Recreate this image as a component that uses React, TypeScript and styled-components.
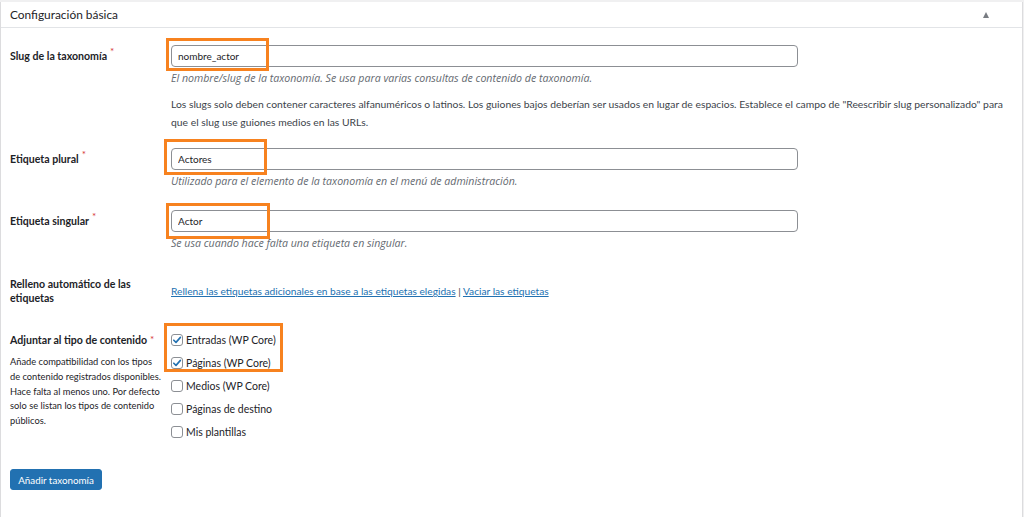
import styled, { createGlobalStyle } from 'styled-components';

/* —— tokens —— */
const ink = '#1d2327';
const body = '#3c434a';
const muted = '#646970';
const blue = '#2271b1';
const line = '#dcdcde';
const mark = '#f7821f';
const font = 'Lato, "Open Sans", sans-serif';
const italic = '"Open Sans", "Noto Sans", sans-serif';

const Global = createGlobalStyle`
  html, body { margin: 0; background: #f0f0f1; }
  body { font-family: ${font}; color: ${body}; }
  * { box-sizing: border-box; }
`;

/* —— postbox shell —— */
const Box = styled.section`
  margin-top: 2px;
  width: 1023px;
  min-height: 515px;
  background: #fff;
  border-left: 1px solid ${line};
  border-right: 1px solid ${line};
`;

const Head = styled.header`
  height: 26px;
  display: flex;
  align-items: center;
  justify-content: space-between;
  padding: 0 33px 0 9px;
  border-bottom: 1px solid #e2e4e7;
`;

const HeadTitle = styled.h2`
  margin: 0;
  font-size: 11.9px;
  font-weight: 400;
  color: ${ink};
`;

const Caret = styled.span`
  width: 0;
  height: 0;
  border-left: 3.5px solid transparent;
  border-right: 3.5px solid transparent;
  border-bottom: 6px solid #787c82;
`;

const Inside = styled.div`
  padding: 0 0 0 9px;
`;

/* —— form rows —— */
const Row = styled.div<{ $pt: number; $center?: boolean }>`
  display: grid;
  grid-template-columns: 161px 627px;
  padding-top: ${p => p.$pt}px;
  align-items: ${p => (p.$center ? 'center' : 'start')};
`;

const Label = styled.div<{ $inline?: boolean }>`
  font-size: 10.6px;
  font-weight: 700;
  color: ${ink};
  line-height: ${p => (p.$inline ? '22px' : '14px')};
  padding-right: 6px;
`;

const Req = styled.span`
  color: #d63638;
  font-weight: 400;
  margin-left: 3px;
  font-size: 10px;
  vertical-align: top;
  line-height: 12px;
`;

const LabelNote = styled.p`
  margin: 8px 0 0;
  font-size: 9.3px;
  line-height: 14.8px;
  color: ${ink};
  font-weight: 400;
  white-space: nowrap;
`;

const Field = styled.div`
  position: relative;
`;

const Input = styled.input`
  display: block;
  width: 627px;
  height: 22px;
  padding: 0 6px;
  border: 1px solid #8c8f94;
  border-radius: 4px;
  font-family: ${font};
  font-size: 10px;
  color: ${ink};
  background: #fff;
  outline: none;
`;

const Help = styled.p`
  margin: 4px 0 0;
  font-family: ${italic};
  font-size: 10.6px;
  line-height: 15px;
  font-style: italic;
  color: ${muted};
`;

const Para = styled.p`
  margin: 9px 0 0;
  width: 840px;
  font-size: 10.35px;
  line-height: 18px;
  color: ${body};
`;

const Links = styled.div`
  font-size: 10.2px;
  color: ${body};
  a { color: ${blue}; text-decoration: underline; }
`;

/* —— checkbox list —— */
const Checks = styled.div`
  position: relative;
  display: flex;
  flex-direction: column;
  gap: 7px;
  margin-top: -1px;
`;

const Check = styled.label`
  display: flex;
  align-items: center;
  gap: 3px;
  height: 16px;
  font-size: 10.5px;
  color: ${ink};
`;

const Tick = styled.span`
  width: 12px;
  height: 12px;
  border: 1px solid #8c8f94;
  border-radius: 3px;
  background: #fff;
  display: grid;
  place-items: center;
  flex: none;
`;

/* —— annotation frames —— */
const Frame = styled.span<{ $x: number; $y: number; $w: number; $h: number }>`
  position: absolute;
  left: ${p => p.$x}px;
  top: ${p => p.$y}px;
  width: ${p => p.$w}px;
  height: ${p => p.$h}px;
  border: 3px solid ${mark};
  pointer-events: none;
`;

const Button = styled.button`
  margin-top: 29px;
  height: 21px;
  width: 92px;
  padding: 0;
  border: 1px solid ${blue};
  border-radius: 3px;
  background: ${blue};
  color: #fff;
  font-family: ${font};
  font-size: 9.8px;
`;

const CheckMark = () => (
  <svg width="10" height="10" viewBox="0 0 10 10">
    <path d="M1.8 5.2 4 7.4 8.4 2.4" fill="none" stroke={blue} strokeWidth="1.6" strokeLinecap="round" strokeLinejoin="round" />
  </svg>
);

const types = [
  { name: 'Entradas (WP Core)', on: true },
  { name: 'Páginas (WP Core)', on: true },
  { name: 'Medios (WP Core)', on: false },
  { name: 'Páginas de destino', on: false },
  { name: 'Mis plantillas', on: false },
];

export default function App() {
  return (
    <>
      <Global />
      <Box>
        <Head>
          <HeadTitle>Configuración básica</HeadTitle>
          <Caret />
        </Head>

        <Inside>
          <Row $pt={17}>
            <Label $inline>Slug de la taxonomía<Req>*</Req></Label>
            <Field>
              <Input defaultValue="nombre_actor" />
              <Frame $x={-5} $y={-7} $w={103} $h={33} />
              <Help>El nombre/slug de la taxonomía. Se usa para varias consultas de contenido de taxonomía.</Help>
              <Para>
                Los slugs solo deben contener caracteres alfanuméricos o latinos. Los guiones bajos deberían ser usados en lugar de espacios. Establece el campo de "Reescribir slug personalizado" para que el slug use guiones medios en las URLs.
              </Para>
            </Field>
          </Row>

          <Row $pt={17}>
            <Label $inline>Etiqueta plural<Req>*</Req></Label>
            <Field>
              <Input defaultValue="Actores" />
              <Frame $x={-7} $y={-9} $w={103} $h={36} />
              <Help>Utilizado para el elemento de la taxonomía en el menú de administración.</Help>
            </Field>
          </Row>

          <Row $pt={21}>
            <Label $inline>Etiqueta singular<Req>*</Req></Label>
            <Field>
              <Input defaultValue="Actor" />
              <Frame $x={-5} $y={-7} $w={104} $h={36} />
              <Help>Se usa cuando hace falta una etiqueta en singular.</Help>
            </Field>
          </Row>

          <Row $pt={26} $center>
            <Label>Relleno automático de las etiquetas</Label>
            <Links>
              <a href="#">Rellena las etiquetas adicionales en base a las etiquetas elegidas</a> | <a href="#">Vaciar las etiquetas</a>
            </Links>
          </Row>

          <Row $pt={28}>
            <Label>
              Adjuntar al tipo de contenido<Req>*</Req>
              <LabelNote>
                Añade compatibilidad con los tipos<br />
                de contenido registrados disponibles.<br />
                Hace falta al menos uno. Por defecto<br />
                solo se listan los tipos de contenido<br />
                públicos.
              </LabelNote>
            </Label>
            <Checks>
              {types.map(t => (
                <Check key={t.name}>
                  <Tick>{t.on && <CheckMark />}</Tick>
                  {t.name}
                </Check>
              ))}
              <Frame $x={-7} $y={-9} $w={119} $h={49} />
            </Checks>
          </Row>

          <Button>Añadir taxonomía</Button>
        </Inside>
      </Box>
    </>
  );
}
